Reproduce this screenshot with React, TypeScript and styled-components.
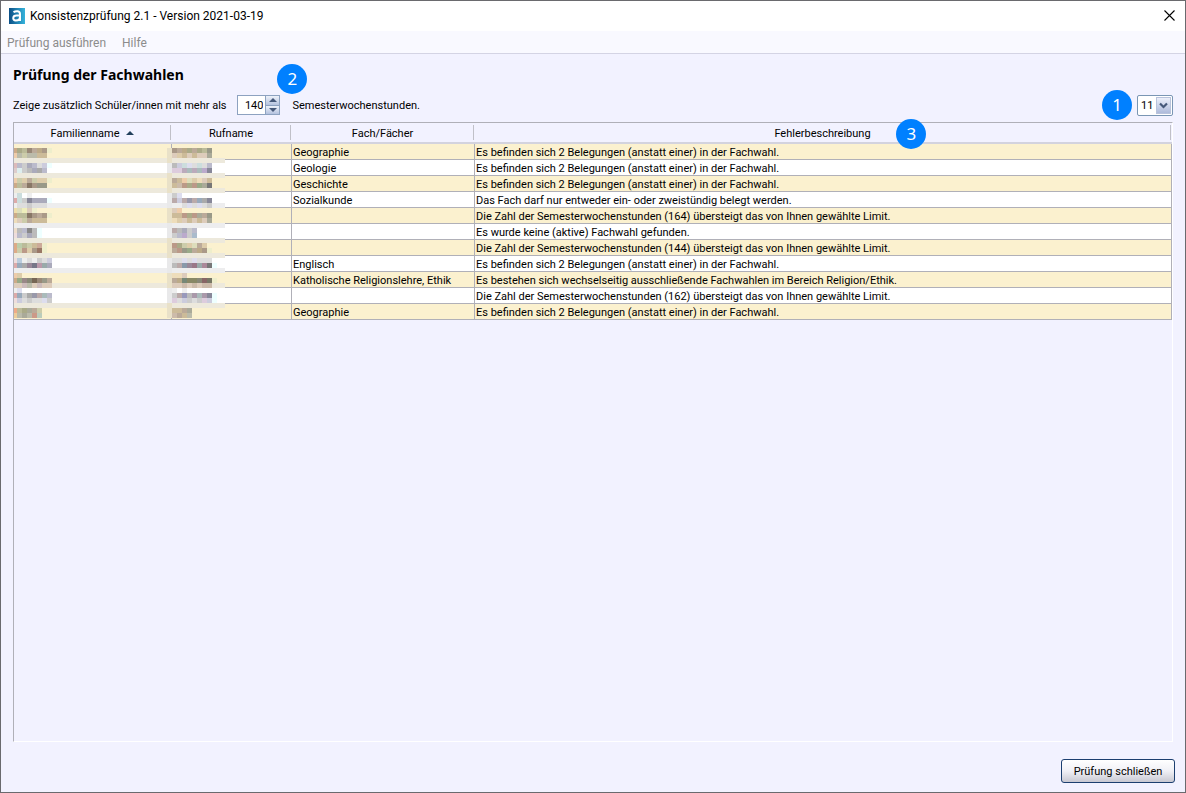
import React, { useState } from 'react';
import styled, { createGlobalStyle } from 'styled-components';

const GlobalStyle = createGlobalStyle`
  * { box-sizing: border-box; }
  body {
    margin: 0;
    background: #f2f2ff;
    color: #000;
    font: 11px/16px Roboto, "Open Sans", sans-serif;
  }
  button, input, select { font: inherit; color: inherit; margin: 0; }
`;

const Window = styled.div`
  display: flex;
  flex-direction: column;
  min-height: 100vh;
  border: 1px solid #6a6a6e;
  background: #f2f2ff;
`;

const TitleBar = styled.header`
  display: flex;
  align-items: center;
  gap: 5px;
  height: 29px;
  padding: 0 8px;
  background: #fff;
  font-size: 12px;
`;

const WindowTitle = styled.span`
  flex: 1;
`;

const CloseButton = styled.button`
  display: flex;
  padding: 2px;
  border: 0;
  background: none;
`;

const MenuBar = styled.nav`
  display: flex;
  align-items: center;
  gap: 16px;
  height: 24px;
  padding: 1px 6px 0;
  background: #f9f9ff;
  border-top: 1px solid #fff;
  border-bottom: 1px solid #d4d4e4;
`;

const MenuItem = styled.button`
  padding: 0;
  border: 0;
  background: none;
  color: #8c8c8c;
  font-size: 12px;
`;

const Content = styled.main`
  flex: 1;
  display: flex;
  flex-direction: column;
  padding: 10px 12px;
`;

const Heading = styled.h1`
  margin: 0;
  font: bold 14px/22px "Noto Sans", sans-serif;
`;

const FilterBar = styled.div`
  display: flex;
  align-items: center;
  height: 22px;
  margin: 8px 0 6px;
`;

const FilterLabel = styled.label`
  padding-top: 2px;
`;

const Spinner = styled.div`
  position: relative;
  display: flex;
  width: 43px;
  height: 20px;
  margin: 0 12px 0 11px;
  border: 1px solid #8da2c0;
  background: #fff;
`;

const SpinnerInput = styled.input`
  flex: 1;
  min-width: 0;
  padding: 2px 2px 0 0;
  border: 0;
  outline: 0;
  background: none;
  text-align: right;
  appearance: textfield;
  &::-webkit-inner-spin-button { appearance: none; margin: 0; }
`;

const SpinnerButtons = styled.div`
  display: flex;
  flex-direction: column;
  width: 14px;
  border-left: 1px solid #8da2c0;
`;

const StepButton = styled.button`
  flex: 1;
  display: flex;
  align-items: center;
  justify-content: center;
  padding: 0;
  border: 0;
  background: linear-gradient(#eef2fa, #b4c2de);
  & + & { border-top: 1px solid #8da2c0; }
`;

const Combo = styled.div`
  position: relative;
  display: flex;
  width: 36px;
  height: 21px;
  margin-left: auto;
  border: 1px solid #7a96b4;
  border-radius: 2px;
  background: #fff;
`;

const ComboSelect = styled.select`
  width: 100%;
  padding: 2px 0 0 3px;
  border: 0;
  outline: 0;
  background: none;
  appearance: none;
`;

const ComboArrow = styled.span`
  position: absolute;
  top: 1px;
  right: 1px;
  display: flex;
  align-items: center;
  justify-content: center;
  width: 15px;
  height: 17px;
  border: 1px solid #b9c3dc;
  background: linear-gradient(#eceffa, #aebbdb);
  pointer-events: none;
`;

const Badge = styled.span<{ $left: number; $top: number }>`
  position: absolute;
  left: ${(p) => p.$left}px;
  top: ${(p) => p.$top}px;
  width: 30px;
  height: 30px;
  border-radius: 50%;
  background: #0080ff;
  color: #fff;
  font: 17px/30px "Noto Sans", sans-serif;
  text-align: center;
`;

const TableFrame = styled.section`
  position: relative;
  flex: 1;
  border: 1px solid;
  border-color: #b0b0b8 #fff #fff #b0b0b8;
`;

const Table = styled.table`
  width: 100%;
  border-collapse: separate;
  border-spacing: 0;
  table-layout: fixed;
`;

const Column = styled.col<{ $width?: number }>`
  width: ${(p) => (p.$width ? `${p.$width}px` : 'auto')};
`;

const HeadCell = styled.th`
  height: 21px;
  padding: 0;
  border-bottom: 2px solid #d3d3de;
  font-weight: normal;
`;

const HeadLabel = styled.div`
  position: relative;
  display: flex;
  align-items: center;
  justify-content: center;
  gap: 6px;
  height: 15px;
  margin: 2px 1px 2px 0;
  padding-top: 2px;
  border-right: 1px solid #c0c0c8;
`;

const BadgeAnchor = styled.span`
  position: relative;
`;

const SortArrow = styled.svg`
  margin-bottom: 2px;
`;

const Row = styled.tr`
  background: #fff;
  &:nth-child(odd) { background: #fbf1cf; }
`;

const Cell = styled.td`
  height: 16px;
  padding: 2px 1px 0;
  border-right: 1px solid #b0b0b8;
  border-bottom: 1px solid #b0b0b8;
  line-height: 13px;
  white-space: nowrap;
  overflow: hidden;
`;

const MosaicLayer = styled.svg`
  position: absolute;
  top: 22px;
  left: 0;
`;

const Footer = styled.footer`
  display: flex;
  justify-content: flex-end;
  padding: 7px 10px 9px;
`;

const ActionButton = styled.button`
  height: 24px;
  width: 114px;
  padding: 2px 0 0;
  border: 1px solid #1c3f70;
  border-radius: 3px;
  background: linear-gradient(#fff, #f0f0f6 50%, #c8c8d2);
`;

const findings: [string, string][] = [
  ['Geographie', 'Es befinden sich 2 Belegungen (anstatt einer) in der Fachwahl.'],
  ['Geologie', 'Es befinden sich 2 Belegungen (anstatt einer) in der Fachwahl.'],
  ['Geschichte', 'Es befinden sich 2 Belegungen (anstatt einer) in der Fachwahl.'],
  ['Sozialkunde', 'Das Fach darf nur entweder ein- oder zweistündig belegt werden.'],
  ['', 'Die Zahl der Semesterwochenstunden (164) übersteigt das von Ihnen gewählte Limit.'],
  ['', 'Es wurde keine (aktive) Fachwahl gefunden.'],
  ['', 'Die Zahl der Semesterwochenstunden (144) übersteigt das von Ihnen gewählte Limit.'],
  ['Englisch', 'Es befinden sich 2 Belegungen (anstatt einer) in der Fachwahl.'],
  ['Katholische Religionslehre, Ethik', 'Es bestehen sich wechselseitig ausschließende Fachwahlen im Bereich Religion/Ethik.'],
  ['', 'Die Zahl der Semesterwochenstunden (162) übersteigt das von Ihnen gewählte Limit.'],
  ['Geographie', 'Es befinden sich 2 Belegungen (anstatt einer) in der Fachwahl.'],
];

// Anonymised names: one entry per 5px band as [ground, surname blocks, first-name blocks].
const Y = '#fbf1cf';
const W = '#ffffff';
const G = '#ededee';
const B = '#ede9dc';
const bands: [string, string, string][] = [
  [Y, 'ca8 aa8 bb9 987 ba9 ba8 a98 eec', 'a98 ba9 ba8 aa8 ba9 aa8 bb9 998'],
  [Y, 'eca bba cca bba bba cb9 cb9', 'dcb dca cb9 dcb cb9 dcb dcb aa9'],
  [B, '', ''],
  [W, 'dbb bbc ccc aab bbc ddd ccd eff', 'bbb ccd cdd dde ddd cdd ddd bbc'],
  [W, 'dcc dee ccc bbb aab aaa bbc', 'dcd dcd bab abb bab abb bac 889'],
  [B, '', ''],
  [Y, 'eca cca dca ba9 cca dca dca eec', 'ba9 cb9 eca ddb dca edb dcb cb9'],
  [Y, 'ca8 bb9 ba9 876 a98 998 998', 'cb9 cba b98 aa8 b98 9a8 aa9 777'],
  [B, '', ''],
  [W, 'eee cdd fff eee', 'ccc dde'],
  [W, 'daa cdd ccc 889 aab aab aab eff', 'baa ccd baa 99a baa 9ab aaa 889'],
  [G, 'eee ddd ddd ccc ddd ddd ddd', 'eee eee ddd dde ddd dde ddd ccc'],
  [Y, 'eda ddb eeb dcb eec', 'dcb eca'],
  [Y, 'ca8 bb9 bb9 876 a98 ba9 a98 eec', 'cb9 cb9 b98 aa8 b98 aa9 ba9 998'],
  [Y, 'edb dcb cca ba9 cb9 cb9 cb9', 'edb dca dcb cb9 dcb cb9 dcb aa9'],
  [G, '', ''],
  [W, 'edc bbb bbc 888 bbb eff', 'baa bbb aab ccc bbc'],
  [W, 'edd bbc ccc aab bbb eff', 'ccc bbc bac ccc abc'],
  [B, '', ''],
  [Y, 'da8 bca bb9 cca cb9 ca9 eec', 'b98 aa8 cca dca ddb ba9 dca'],
  [Y, 'da8 cca b98 dca a98 976 eec', 'ba9 b98 998 9a8 ba9 ba8 a98 eec'],
  [B, '', ''],
  [W, 'edd bcd eee ddd eee ccc ddd ccd', 'ddd ddd dde ddd dde ddd ddd ddd'],
  [W, 'daa 9ab aaa 989 778 b9a 9aa aab', 'bbb baa 89a 989 978 9aa a89 777 eff'],
  [G, '', ''],
  [Y, 'eca dca', 'edb edb dcb'],
  [Y, 'ca8 9a8 988 887 765 987 998 ba9', 'ba9 ba8 787 886 886 887 866 776 eec'],
  [B, 'dcb dcb cbb bba dcb cbb dcb dcb', 'dcb dcb cba dcb cba dcb cba cba'],
  [W, 'eee dde', 'eee fff eee'],
  [W, 'daa 9ab ccc aaa 99a baa abb bbc', 'ccc baa 99b bbb a9a abb a9a 889 eff'],
  [W, 'edd ccd ddd ccc ddd ddd dde ccc', 'dcd ddd ccd ccc ddd ccc dcd ccd eff'],
  [B, '', ''],
  [Y, 'ea8 bb9 aa8 aa9 ba9 cca', 'cb9 cb9 ba9 aa9'],
  [Y, 'ec9 bba aa9 bba c98 bcb', 'cba ba9 cb9 bba'],
];

function Blocks({ colors, start, y }: { colors: string; start: number; y: number }) {
  return (
    <>
      {colors.split(' ').filter(Boolean).map((c, i) => (
        <rect key={i} x={start + i * 5} y={y} width={5} height={5} fill={`#${c}`} />
      ))}
    </>
  );
}

function Mosaic() {
  return (
    <MosaicLayer width="211" height="173" viewBox="0 0 211 173" shapeRendering="crispEdges" aria-hidden="true">
      {bands.map(([ground, last, first], i) => {
        const y = 3 + i * 5;
        return (
          <g key={i}>
            <rect x={0} y={y} width={211} height={5} fill={ground} />
            <rect x={153} y={y} width={5} height={5} fill={ground === W || ground === G ? '#e9e9ea' : '#e9e1c8'} />
            <Blocks colors={last} start={-2} y={y} />
            <Blocks colors={first} start={158} y={y} />
          </g>
        );
      })}
    </MosaicLayer>
  );
}

function Triangle({ down = false }: { down?: boolean }) {
  return (
    <svg width="8" height="4" viewBox="0 0 8 4" aria-hidden="true">
      <path d={down ? 'M0 0H8L4 4Z' : 'M0 4H8L4 0Z'} fill="#46597a" />
    </svg>
  );
}

export default function App() {
  const [limit, setLimit] = useState(140);
  return (
    <Window>
      <GlobalStyle />
      <TitleBar>
        <svg width="16" height="16" viewBox="0 0 16 16" aria-hidden="true">
          <defs>
            <linearGradient id="logo" x1="0" y1="0" x2="1" y2="0">
              <stop offset="0" stopColor="#0b4f86" />
              <stop offset="1" stopColor="#35b4dc" />
            </linearGradient>
          </defs>
          <rect width="16" height="16" fill="url(#logo)" />
          <path d="M4.5 4.2C7 2.6 11 2.8 11 6V13M11 7.5H7.5C3.2 7.5 3.4 12.5 6.7 12.5C9 12.5 11 11.5 11 9" fill="none" stroke="#fff" strokeWidth="2" />
        </svg>
        <WindowTitle>Konsistenzprüfung 2.1 - Version 2021-03-19</WindowTitle>
        <CloseButton aria-label="Schließen">
          <svg width="11" height="11" viewBox="0 0 11 11" aria-hidden="true">
            <path d="M0.5 0.5L10.5 10.5M10.5 0.5L0.5 10.5" stroke="#000" strokeWidth="1.1" />
          </svg>
        </CloseButton>
      </TitleBar>
      <MenuBar>
        <MenuItem>Prüfung ausführen</MenuItem>
        <MenuItem>Hilfe</MenuItem>
      </MenuBar>
      <Content>
        <Heading>Prüfung der Fachwahlen</Heading>
        <FilterBar>
          <FilterLabel htmlFor="limit">Zeige zusätzlich Schüler/innen mit mehr als</FilterLabel>
          <Spinner>
            <SpinnerInput id="limit" type="number" value={limit} onChange={(e) => setLimit(Number(e.target.value))} />
            <SpinnerButtons>
              <StepButton aria-label="Erhöhen" onClick={() => setLimit(limit + 1)}><Triangle /></StepButton>
              <StepButton aria-label="Verringern" onClick={() => setLimit(limit - 1)}><Triangle down /></StepButton>
            </SpinnerButtons>
            <Badge $left={39} $top={-32}>2</Badge>
          </Spinner>
          <FilterLabel htmlFor="limit">Semesterwochenstunden.</FilterLabel>
          <Combo>
            <Badge $left={-36} $top={-6}>1</Badge>
            <ComboSelect aria-label="Jahrgangsstufe" defaultValue="11">
              <option>11</option>
              <option>12</option>
            </ComboSelect>
            <ComboArrow>
              <svg width="9" height="7" viewBox="0 0 9 7" aria-hidden="true">
                <path d="M1 1.5L4.5 5L8 1.5" fill="none" stroke="#46597a" strokeWidth="2.2" />
              </svg>
            </ComboArrow>
          </Combo>
        </FilterBar>
        <TableFrame>
          <Table>
            <colgroup>
              <Column $width={158} />
              <Column $width={120} />
              <Column $width={183} />
              <Column />
            </colgroup>
            <thead>
              <tr>
                <HeadCell aria-sort="ascending">
                  <HeadLabel>
                    Familienname
                    <SortArrow width="8" height="4" viewBox="0 0 8 4" aria-hidden="true"><path d="M0 4L4 0L8 4Z" fill="#22405c" /></SortArrow>
                  </HeadLabel>
                </HeadCell>
                <HeadCell><HeadLabel>Rufname</HeadLabel></HeadCell>
                <HeadCell><HeadLabel>Fach/Fächer</HeadLabel></HeadCell>
                <HeadCell>
                  <HeadLabel>
                    <BadgeAnchor>Fehlerbeschreibung<Badge $left={122} $top={-7}>3</Badge></BadgeAnchor>
                  </HeadLabel>
                </HeadCell>
              </tr>
            </thead>
            <tbody>
              {findings.map(([subject, message], i) => (
                <Row key={i}>
                  <Cell />
                  <Cell />
                  <Cell>{subject}</Cell>
                  <Cell>{message}</Cell>
                </Row>
              ))}
            </tbody>
          </Table>
          <Mosaic />
        </TableFrame>
      </Content>
      <Footer>
        <ActionButton>Prüfung schließen</ActionButton>
      </Footer>
    </Window>
  );
}
